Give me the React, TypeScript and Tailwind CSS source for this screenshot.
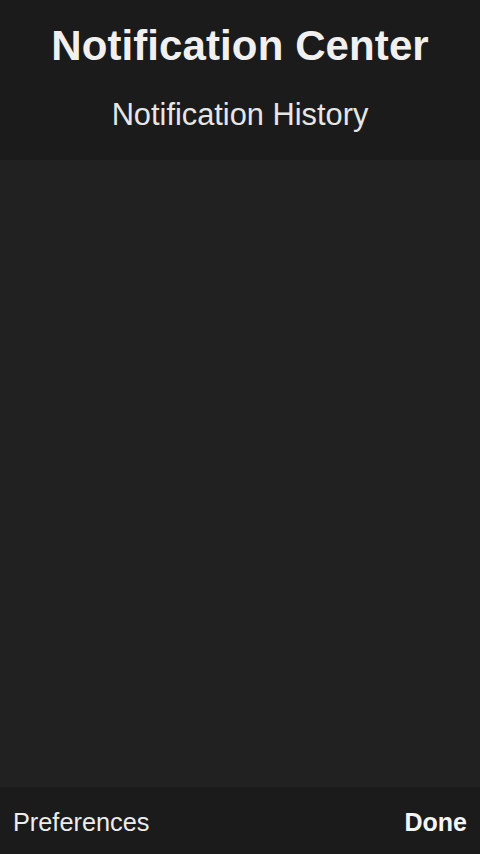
export default function App() {
  return (
    <div
      className="flex h-[854px] w-[480px] flex-col bg-[#212121] text-[#f2f2f2]"
      style={{ fontFamily: '"Liberation Sans", Arial, sans-serif' }}
    >
      <div className="flex h-[160px] flex-col items-center bg-[#1b1b1b]">
        <div className="mt-[22px] text-[42px] font-bold leading-[48px] tracking-[0.1px] text-[#f0f0f0]">
          Notification Center
        </div>
        <div className="mt-[27px] text-[30.8px] leading-[36px] text-[#e6e6e6]">
          Notification History
        </div>
      </div>
      <div className="flex-1" />
      <div className="flex h-[67px] items-center justify-between bg-[#1b1b1b] px-[13px] pt-[4px]">
        <span className="text-[25.3px] text-[#ececec]">Preferences</span>
        <span className="text-[25px] font-bold text-[#f5f5f5]">Done</span>
      </div>
    </div>
  );
}
